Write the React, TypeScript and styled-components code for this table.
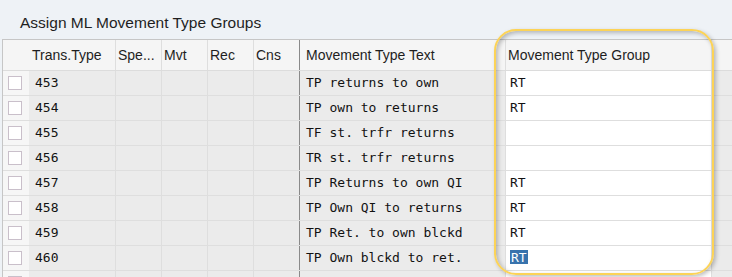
import React from 'react';
import styled, { createGlobalStyle } from 'styled-components';

const GlobalStyle = createGlobalStyle`
  html, body {
    margin: 0;
    padding: 0;
    background: #eef2f6;
    overflow: hidden;
  }
`;

const COLUMNS = '26px 87px 46px 46px 46px 46px 206px 206px 1fr';

const Screen = styled.div`
  position: relative;
  width: 732px;
  height: 277px;
  overflow: hidden;
  background: #eef2f6;
  font-family: 'Liberation Sans', Arial, sans-serif;
`;

const Title = styled.div`
  height: 39px;
  box-sizing: border-box;
  padding: 14px 0 0 20px;
  font-size: 15.5px;
  line-height: 18px;
  color: #1f1f1f;
`;

const Table = styled.div`
  margin-left: 2px;
  border-top: 1px solid #c6c6c6;
  border-left: 1px solid #c6c6c6;
`;

const HeaderRow = styled.div`
  display: grid;
  grid-template-columns: ${COLUMNS};
  height: 31px;
  box-sizing: border-box;
  border-bottom: 1px solid #dcdcdc;
  background: #f5f5f5;
`;

const BodyRow = styled.div`
  display: grid;
  grid-template-columns: ${COLUMNS};
  height: 25px;
  box-sizing: border-box;
  border-bottom: 1px solid #dedede;
`;

type Divider = 'none' | 'light' | 'dark';

const dividerColor = (d?: Divider) =>
  d === 'dark' ? '#8a8a8a' : d === 'light' ? '#dedede' : 'transparent';

const HeadCell = styled.div<{ $pad?: number; $divider?: Divider }>`
  box-sizing: border-box;
  padding-left: ${({ $pad }) => $pad ?? 2}px;
  border-right: 1px solid ${({ $divider }) => dividerColor($divider)};
  font-size: 14px;
  line-height: 30px;
  color: #1e1e1e;
  white-space: nowrap;
  overflow: hidden;
`;

type Tone = 'select' | 'gray' | 'input';

const toneBg: Record<Tone, string> = {
  select: '#f6f6f6',
  gray: '#ebebeb',
  input: '#ffffff',
};

const Cell = styled.div<{ $tone: Tone; $pad?: number; $divider?: Divider }>`
  box-sizing: border-box;
  display: flex;
  align-items: center;
  padding-left: ${({ $pad }) => $pad ?? 6}px;
  padding-bottom: 2px;
  background: ${({ $tone }) => toneBg[$tone]};
  border-right: 1px solid ${({ $divider }) => dividerColor($divider)};
  font-family: 'DejaVu Sans Mono', 'Liberation Mono', monospace;
  font-size: 13px;
  color: #121212;
  white-space: pre;
  overflow: hidden;
`;

const CheckBox = styled.span`
  display: block;
  width: 14px;
  height: 14px;
  margin-top: 1px;
  box-sizing: border-box;
  border: 1px solid #c9bfca;
  background: #fff;
`;

const Selected = styled.span`
  background: #3873ad;
  color: #fff;
  padding: 1px 1px 0;
  line-height: 13px;
`;

const Highlight = styled.div`
  position: absolute;
  left: 494px;
  top: 29px;
  width: 220px;
  height: 246px;
  box-sizing: border-box;
  border: 2px solid #fcd357;
  border-radius: 22px;
  box-shadow: 2px 2px 4px rgba(0, 0, 0, 0.25), inset 2px 2px 4px rgba(0, 0, 0, 0.25);
  pointer-events: none;
`;

type Entry = { type: string; text: string; group: string; active?: boolean };

const entries: Entry[] = [
  { type: '453', text: 'TP returns to own', group: 'RT' },
  { type: '454', text: 'TP own to returns', group: 'RT' },
  { type: '455', text: 'TF st. trfr returns', group: '' },
  { type: '456', text: 'TR st. trfr returns', group: '' },
  { type: '457', text: 'TP Returns to own QI', group: 'RT' },
  { type: '458', text: 'TP Own QI to returns', group: 'RT' },
  { type: '459', text: 'TP Ret. to own blckd', group: 'RT' },
  { type: '460', text: 'TP Own blckd to ret.', group: 'RT', active: true },
  { type: '', text: '', group: '' },
];

const MovementRow = ({ entry }: { entry: Entry }) => (
  <BodyRow>
    <Cell $tone="select" $pad={5}>
      <CheckBox />
    </Cell>
    <Cell $tone="gray" $divider="light">{entry.type}</Cell>
    <Cell $tone="gray" $divider="light" />
    <Cell $tone="gray" $divider="light" />
    <Cell $tone="gray" $divider="light" />
    <Cell $tone="gray" $divider="dark" />
    <Cell $tone="gray" $divider="light">{entry.text}</Cell>
    <Cell $tone="input" $divider="light" $pad={4}>
      {entry.active ? <Selected>{entry.group}</Selected> : entry.group}
    </Cell>
    <Cell $tone="gray" />
  </BodyRow>
);

export default function App() {
  return (
    <>
      <GlobalStyle />
      <Screen>
        <Title>Assign ML Movement Type Groups</Title>
        <Table>
          <HeaderRow>
            <HeadCell />
            <HeadCell $pad={3} $divider="light">Trans.Type</HeadCell>
            <HeadCell $divider="light">Spe...</HeadCell>
            <HeadCell $divider="light">Mvt</HeadCell>
            <HeadCell $divider="light">Rec</HeadCell>
            <HeadCell $divider="dark">Cns</HeadCell>
            <HeadCell $pad={6} $divider="light">Movement Type Text</HeadCell>
            <HeadCell $divider="light">Movement Type Group</HeadCell>
            <HeadCell />
          </HeaderRow>
          {entries.map((e, i) => (
            <MovementRow key={i} entry={e} />
          ))}
        </Table>
        <Highlight />
      </Screen>
    </>
  );
}
